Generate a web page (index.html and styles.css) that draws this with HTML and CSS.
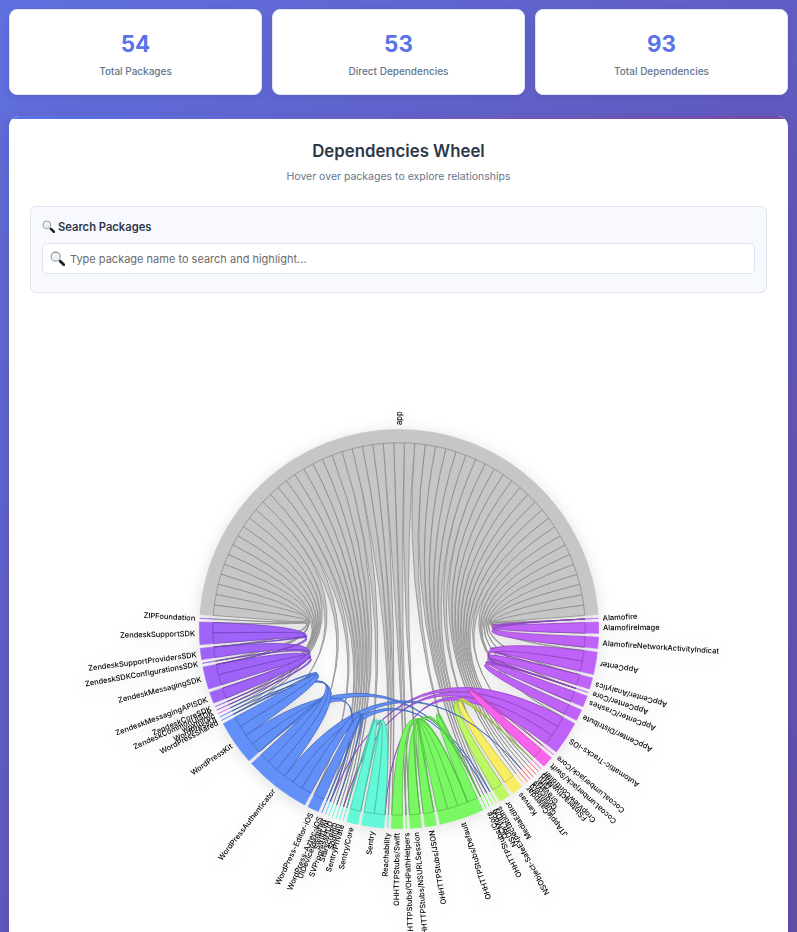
FILE: index.html
```html
<!DOCTYPE html>
<html lang="en">
<head>
<meta charset="utf-8">
<title>Dependencies Wheel</title>
<link rel="stylesheet" href="styles.css">
</head>
<body>
<svg class="defs" width="0" height="0" aria-hidden="true">
  <symbol id="magnifier" viewBox="0 0 16 16">
    <path d="M9.6 9.6l1.6 1.6" stroke="#8a949c" stroke-width="1.6"/>
    <path d="M11 11l3.7 3.7" stroke="#1d2023" stroke-width="3" stroke-linecap="round"/>
    <circle cx="6" cy="6" r="4.8" fill="#eef1f3" stroke="#87939d" stroke-width="1.1"/>
    <path d="M3.2 6a3 3 0 0 1 2.8-2.8" fill="none" stroke="#fff" stroke-width="1"/>
  </symbol>
</svg>
<div class="page">
  <section class="stats">
    <div class="stat"><div class="stat-value">54</div><div class="stat-label">Total Packages</div></div>
    <div class="stat"><div class="stat-value">53</div><div class="stat-label">Direct Dependencies</div></div>
    <div class="stat"><div class="stat-value">93</div><div class="stat-label">Total Dependencies</div></div>
  </section>
  <main class="panel">
    <h1 class="title">Dependencies Wheel</h1>
    <p class="subtitle">Hover over packages to explore relationships</p>
    <section class="search">
      <div class="search-title"><svg class="icon-small"><use href="#magnifier"/></svg>Search Packages</div>
      <div class="search-field"><svg class="icon-large"><use href="#magnifier"/></svg><span>Type package name to search and highlight...</span></div>
    </section>
    <svg class="wheel" id="wheel" viewBox="-320 -320 640 640"></svg>
  </main>
</div>
<script src="wheel.js"></script>
</body>
</html>
```
FILE: styles.css
```css
* { box-sizing: border-box; }
html { overflow: hidden; height: 932px; }
body {
  margin: 0;
  height: 932px;
  overflow: hidden;
  font-family: Inter, "Liberation Sans", sans-serif;
  color: #2d3748;
  background: linear-gradient(135deg, #6070e0 0%, #6259bf 55%, #6550ad 100%);
}
.defs { position: absolute; }
.page { padding: 9px 9px 0; }
.stats { display: grid; grid-template-columns: repeat(3, 1fr); gap: 10px; }
.stat {
  height: 86px;
  padding-top: 21px;
  text-align: center;
  background: #fff;
  border: 1px solid #dfe5f2;
  border-radius: 8px;
  box-shadow: 0 3px 10px rgba(0, 0, 0, 0.08);
}
.stat-value { font-size: 22.4px; line-height: 26px; font-weight: 700; color: #5a73e6; }
.stat-label { margin-top: 6px; font-size: 10px; line-height: 16px; font-weight: 500; color: #66758c; }
.panel {
  position: relative;
  margin-top: 21px;
  height: 880px;
  padding: 25px 21px 0;
  background: #fff;
  border-radius: 10px;
  overflow: hidden;
  box-shadow: 0 6px 20px rgba(0, 0, 0, 0.12);
}
.panel::before {
  content: "";
  position: absolute;
  top: 0; left: 0; right: 0;
  height: 3px;
  background: linear-gradient(90deg, #5a73e6, #764ba2);
}
.title { margin: 0; text-align: center; font-size: 16.8px; line-height: 20px; font-weight: 600; }
.subtitle { margin: 7px 0 0; text-align: center; font-size: 10.5px; line-height: 17px; color: #66758c; }
.search {
  height: 87px;
  margin-top: 21px;
  padding: 11px;
  background: #f8f9fe;
  border: 1px solid #dde4f0;
  border-radius: 6px;
}
.search-title { display: flex; align-items: center; gap: 3px; height: 17px; font-size: 11.2px; font-weight: 600; }
.icon-small { width: 13px; height: 13px; }
.search-field {
  display: flex;
  align-items: center;
  gap: 5px;
  height: 31px;
  margin-top: 8px;
  padding: 0 7px;
  font-size: 11px;
  color: #6b6b6b;
  background: #fff;
  border: 1px solid #dde4f0;
  border-radius: 5px;
}
.icon-large { width: 15px; height: 15px; }
.wheel { display: block; width: 640px; height: 640px; margin: 16px auto 0; filter: drop-shadow(0 3px 8px rgba(0, 0, 0, 0.13)); overflow: hidden; }
.wheel text { font-size: 7.5px; font-weight: 500; fill: #000; }
.chord, .arc { stroke-width: 0.7px; }
```
FILE: wheel.js
```js
// Each package is listed with the packages it depends on.
const packages = [
  ["app", "*"],
  ["Alamofire"],
  ["AlamofireImage", "Alamofire"],
  ["AlamofireNetworkActivityIndicator", "Alamofire"],
  ["AppCenter", "AppCenter/Analytics", "AppCenter/Crashes"],
  ["AppCenter/Analytics", "AppCenter/Core"],
  ["AppCenter/Core"],
  ["AppCenter/Crashes", "AppCenter/Core"],
  ["AppCenter/Distribute", "AppCenter/Core"],
  ["Automattic-Tracks-iOS", "Sentry", "Sodium", "UIDeviceIdentifier"],
  ["CocoaLumberjack/Core"],
  ["CocoaLumberjack/Swift", "CocoaLumberjack/Core"],
  ["CropViewController"],
  ["FSInteractiveMap"],
  ["Gifu"],
  ["Gravatar"],
  ["Gridicons"],
  ["Gutenberg"],
  ["JTAppleCalendar"],
  ["Kanvas", "CropViewController"],
  ["MediaEditor", "CropViewController"],
  ["NSObject-SafeExpectations"],
  ["NSURL+IDN"],
  ["OCMock"],
  ["OHHTTPStubs/Core"],
  ["OHHTTPStubs/Default", "OHHTTPStubs/Core", "OHHTTPStubs/JSON", "OHHTTPStubs/NSURLSession", "OHHTTPStubs/OHPathHelpers"],
  ["OHHTTPStubs/JSON", "OHHTTPStubs/Core"],
  ["OHHTTPStubs/NSURLSession", "OHHTTPStubs/Core"],
  ["OHHTTPStubs/OHPathHelpers"],
  ["OHHTTPStubs/Swift", "OHHTTPStubs/Default"],
  ["Reachability"],
  ["Sentry", "Sentry/Core", "SentryPrivate"],
  ["Sentry/Core", "SentryPrivate"],
  ["SentryPrivate"],
  ["Sodium"],
  ["Starscream"],
  ["SVProgressHUD"],
  ["SwiftLint"],
  ["UIDeviceIdentifier"],
  ["WordPress-Aztec-iOS"],
  ["WordPress-Editor-iOS", "WordPress-Aztec-iOS"],
  ["WordPressAuthenticator", "Gridicons", "NSURL+IDN", "SVProgressHUD", "WordPressKit", "WordPressShared", "WordPressUI"],
  ["WordPressKit", "NSObject-SafeExpectations", "UIDeviceIdentifier", "WordPressShared", "wpxmlrpc"],
  ["WordPressShared"],
  ["WordPressUI"],
  ["wpxmlrpc"],
  ["ZendeskCommonUISDK"],
  ["ZendeskCoreSDK"],
  ["ZendeskMessagingAPISDK", "ZendeskSDKConfigurationsSDK"],
  ["ZendeskMessagingSDK", "ZendeskCommonUISDK", "ZendeskMessagingAPISDK"],
  ["ZendeskSDKConfigurationsSDK"],
  ["ZendeskSupportProvidersSDK", "ZendeskCoreSDK"],
  ["ZendeskSupportSDK", "ZendeskMessagingSDK", "ZendeskSupportProvidersSDK"],
  ["ZIPFoundation"]
];
const names = packages.map(p => p[0]);
const n = names.length;
const matrix = packages.map((p, i) => names.map((name, j) =>
  p[1] === "*" ? (j === i ? 0 : 1) : (p.indexOf(name, 1) > 0 ? 1 : 0)));

const INNER = 186.2, OUTER = 199.6, PAD = 0.019;
const total = matrix.flat().reduce((a, b) => a + b, 0);
const unit = (2 * Math.PI - PAD * n) / total;

// Angles run clockwise; the layout starts so that the first group is centred on top.
const groups = [], sub = {};
let angle = -(n - 1) * unit / 2;
const origin = angle;
for (let i = 0; i < n; i++) {
  const start = angle;
  for (let s = 1; s < n; s++) {
    const j = (i - s + n) % n, end = angle + matrix[i][j] * unit;
    sub[i + "-" + j] = [angle, end];
    angle = end;
  }
  groups.push({ start, end: angle });
  angle += PAD;
}

const color = (i, dark) => {
  if (i === 0) return dark ? "#858585" : "#c6c6c6";
  const hue = Math.trunc((names[i].charCodeAt(0) - 97) / 26 * 360);
  return `hsl(${hue},${dark ? 50 : 91}%,${dark ? 48 : 68}%)`;
};
const svg = document.getElementById("wheel");
const add = (tag, attrs, text) => {
  const el = document.createElementNS("http://www.w3.org/2000/svg", tag);
  for (const k in attrs) el.setAttribute(k, attrs[k]);
  if (text) el.textContent = text;
  svg.appendChild(el);
};
const pt = (a, r) => (r * Math.sin(a)).toFixed(3) + "," + (-r * Math.cos(a)).toFixed(3);
const arc = (a, b, r, sweep) => `A${r},${r} 0 ${Math.abs(b - a) > Math.PI ? 1 : 0} ${sweep} ${pt(b, r)}`;

groups.forEach((g, i) => add("path", {
  class: "arc", fill: color(i), stroke: color(i),
  d: `M${pt(g.start, OUTER)}${arc(g.start, g.end, OUTER, 1)}L${pt(g.end, INNER)}${arc(g.end, g.start, INNER, 0)}Z`
}));

for (let i = 0; i < n; i++) {
  for (let j = i + 1; j < n; j++) {
    if (!matrix[i][j] && !matrix[j][i]) continue;
    const owner = matrix[i][j] ? i : j, other = owner === i ? j : i;
    const s = sub[owner + "-" + other], t = sub[other + "-" + owner];
    add("path", {
      class: "chord", fill: color(owner), stroke: color(owner, true),
      d: `M${pt(s[0], INNER)}${arc(s[0], s[1], INNER, 1)}Q0,0 ${pt(t[0], INNER)}Q0,0 ${pt(s[0], INNER)}Z`
    });
  }
}

groups.forEach((g, i) => {
  const mid = (g.start + g.end) / 2, flip = mid - origin > Math.PI;
  add("text", {
    dy: "0.35em", "text-anchor": flip ? "end" : "start",
    transform: `rotate(${mid * 180 / Math.PI - 90}) translate(204,0)${flip ? " rotate(180)" : ""}`
  }, names[i]);
});
```
